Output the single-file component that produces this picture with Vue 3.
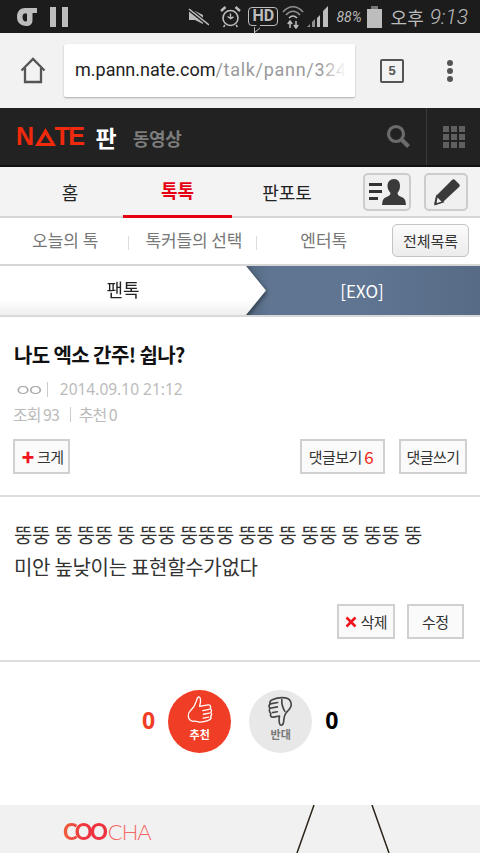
<template>
  <div class="page">
    <div class="status">
      <div class="status-left">
        <svg width="20" height="20" viewBox="0 0 20 20"><path d="M0 10C0 4 3.500 1 8 1h12v5h-4.500v7c0 4-2.500 6-6 6C3.500 19 0 15.500 0 10zM7 6.500C6 7.500 5.500 8.500 5.500 10c0 2.500 1 4.500 3.500 4.500l1-.5V6.500z" fill="#bdbdbd" fill-rule="evenodd"/></svg>
        <svg width="18" height="20" viewBox="0 0 18 20"><path d="M0 0h6v20H0zM12 0h6v20h-6z" fill="#bdbdbd"/></svg>
      </div>
      <div class="status-right">
        <svg class="s-mute" width="21" height="18" viewBox="0 0 21 18"><path d="M1 3h6l8 4v9l-8-4H1z" fill="#bdbdbd"/><path d="M1 1l20 16" stroke="#1c1c1c" stroke-width="4"/><path d="M1 1l20 16" stroke="#bdbdbd" stroke-width="1.600"/></svg>
        <svg class="s-alarm" width="21" height="22" viewBox="0 0 21 22" fill="none" stroke="#bdbdbd"><circle cx="10.500" cy="12" r="7.500" stroke-width="1.600"/><path d="M10.500 7.500v5l-3-2M13.500 11l-3 1.500" stroke-width="1.400"/><path d="M1 5l4.500-4M20 5l-4.500-4" stroke-width="2.400"/><path d="M5 19l-1.500 2M16 19l1.500 2" stroke-width="1.400"/></svg>
        <div class="hd">HD</div>
        <svg class="s-wifi" width="22" height="24" viewBox="0 0 22 24" fill="none" stroke="#8f8f8f"><path d="M1 7c6-7 14-7 20 0" stroke-width="1.600"/><path d="M4 10c4.500-5 9.500-5 14 0" stroke-width="1.600"/><path d="M7 13c2.500-2.500 5.500-2.500 8 0" stroke="#bdbdbd" stroke-width="1.600"/><path d="M8 23v-6M5.800 19l2.200-3 2.200 3M14 16v6M11.800 20l2.200 3 2.200-3" stroke="#bdbdbd" stroke-width="1.500"/></svg>
        <svg class="s-signal" width="21" height="23" viewBox="0 0 21 23"><path d="M0 22h3v-3zM5 22h3v-8l-3 3z" fill="#8f8f8f"/><path d="M10 22h3V10l-3 3zM16 22h5V1l-5 5z" fill="#bdbdbd"/></svg>
        <span class="battery-text">88%</span>
        <div class="battery"></div>
        <span class="clock-ko">오후</span>
        <i class="clock-time">9:13</i>
      </div>
    </div>

    <div class="browser">
      <svg class="home" width="26" height="27" viewBox="0 0 26 27" fill="none" stroke="#555" stroke-width="2.300"><path d="M1.500 13.500L13 2l11.500 11.500"/><path d="M5 11v14h16V11"/></svg>
      <div class="url"><span class="url-main">m.pann.nate.com</span><span class="url-path">/talk/pann/324</span></div>
      <div class="tab-count">5</div>
      <div class="dots"><span></span><span></span><span></span></div>
    </div>

    <header class="nate">
      <div class="logo">N<svg width="21" height="18" viewBox="0 0 21 18"><path d="M10.500 0L21 18H0zM10.500 7L5.500 15h10z" fill="#f02a0c" fill-rule="evenodd"/></svg>TE</div>
      <span class="pan">판</span>
      <span class="video">동영상</span>
      <div class="nate-right">
        <svg class="search" width="25" height="25" viewBox="0 0 25 25" fill="none" stroke="#6b6b6b"><circle cx="10" cy="10" r="7.500" stroke-width="3.200"/><path d="M15.500 15.500l7 7" stroke-width="4.200"/></svg>
        <div class="grid-btn">
          <span v-for="n in 9" :key="n"></span>
        </div>
      </div>
    </header>

    <nav class="tabs">
      <div class="tab tab-home">홈</div>
      <div class="tab active">톡톡</div>
      <div class="tab tab-po">판포토</div>
      <div class="tab-icons">
        <div class="icon-btn wide">
          <svg width="37" height="26" viewBox="0 0 37 26"><path d="M0 4h13v3H0zM0 11h13v3H0zM0 18h9v3H0z" fill="#333"/><path d="M25 0c4 0 6 3 6 7 0 3-1 5-2.500 7 0 2 1.500 3 4 4 2.500 1 4 2 4.500 8H13c.5-6 2-7 4.500-8 2.500-1 4-2 4-4-1.500-2-3-4-3-7 0-4 2.500-7 6.500-7z" fill="#3a3a3a"/></svg>
        </div>
        <div class="icon-btn">
          <svg width="28" height="28" viewBox="0 0 28 28"><path d="M20 2c1-1 2-1 3 0l4 4c1 1 1 2 0 3L11 24 2 26.500 4 18z" fill="#3a3a3a"/><path d="M5 18l6 6-7.500 2.300z" fill="#f3f3f3" stroke="#3a3a3a" stroke-width="1.500"/><path d="M2.500 26.500l.8-3 2.300 2.300z" fill="#3a3a3a"/></svg>
        </div>
      </div>
    </nav>

    <div class="subtabs">
      <span class="sub sub-1">오늘의 톡</span>
      <i class="sep"></i>
      <span class="sub sub-2">톡커들의 선택</span>
      <i class="sep"></i>
      <span class="sub sub-3">엔터톡</span>
      <button class="all">전체목록</button>
    </div>

    <div class="crumb">
      <div class="crumb-left"><div class="crumb-shape">팬톡</div></div>
      <div class="crumb-right">[EXO]</div>
    </div>

    <section class="head">
      <h1>나도 엑소 간주! 쉽나?</h1>
      <div class="meta-1"><span class="nick">ㅇㅇ</span><i class="bar"></i><span>2014.09.10 21:12</span></div>
      <div class="meta-2"><span>조회 93</span><i class="bar"></i><span>추천 0</span></div>
      <div class="head-btns">
        <button class="btn big-btn"><b class="plus">✚</b>크게</button>
        <div class="head-right">
          <button class="btn view-btn">댓글보기 <em>6</em></button>
          <button class="btn write-btn">댓글쓰기</button>
        </div>
      </div>
    </section>

    <section class="body">
      <p>뚱뚱 뚱 뚱뚱 뚱 뚱뚱 뚱뚱뚱 뚱뚱 뚱 뚱뚱 뚱 뚱뚱 뚱<br />미안 높낮이는 표현할수가없다</p>
      <div class="body-btns">
        <button class="btn del-btn"><svg width="12" height="12" viewBox="0 0 12 12"><path d="M1.500 1.500l9 9M10.500 1.500l-9 9" stroke="#f0141e" stroke-width="2.600"/></svg>삭제</button>
        <button class="btn edit-btn">수정</button>
      </div>
    </section>

    <section class="votes">
      <span class="count up">0</span>
      <div class="circle red">
        <svg width="30" height="31" viewBox="0 0 30 33" fill="none" stroke="#fff" stroke-width="1.400" stroke-linejoin="round" stroke-linecap="round"><g transform="rotate(-10 15 16)"><path d="M5 14c3-2 6-5 8-9 1-2 1.500-4 3-4 2 0 2 3 1 6l-1.500 4h9c3 0 3 3 1.500 4 1.500 1 1.500 3.500 0 4.500 1 1 .8 3-.8 4 .5 1.500-.5 3-2 3.500-3 1-9 1.500-12 0-2-1-3.500-1.500-5.500-1.500-3-1-4-3-4-6 0-2.500 1-4 3-5.500z"/><path d="M18 16h7M18 20h6.500M17 24h6"/></g></svg>
        <span>추천</span>
      </div>
      <div class="circle gray">
        <svg width="30" height="31" viewBox="0 0 28 33" fill="none" stroke="#444" stroke-width="1.700" stroke-linejoin="round" stroke-linecap="round"><g transform="rotate(-10 14 16)"><path d="M21 3c3 1 5 3 5 7 0 3-3 6-6 8-3 2-4 5-5 9-.5 2-1 4-3 4-2.500 0-2-4-1.500-7l1-3H5c-3 0-3.500-3-2-4.500C1.500 15 1.500 12 3 11c-1-1.500-.5-3.500 1-4.500C3.500 4.500 5 3 7 2.500c4-1 9-1 14 .5z"/><path d="M3 11h8M4 6.500h8M5 16h5M17 4c-1 4-1 8 1 13"/></g></svg>
        <span>반대</span>
      </div>
      <span class="count down">0</span>
    </section>

    <section class="ad">
      <div class="coocha"><span class="coo">COO</span><span class="cha">CHA</span></div>
      <svg class="ad-art" width="110" height="48" viewBox="0 0 110 48" fill="none" stroke="#2b2418" stroke-width="1.500"><path d="M29 0L12 48M87 0L104 48"/></svg>
    </section>
  </div>
</template>

<script setup>
</script>

<style>
html,
body {
  margin: 0;
  background: #fff;
}
</style>

<style scoped>
.page {
  width: 480px;
  height: 853px;
  overflow: hidden;
  background: #fff;
  font-family: "Noto Sans CJK KR", "Noto Sans", sans-serif;
  color: #222;
}

.status {
  height: 33px;
  background: #1c1c1c;
  display: flex;
  align-items: center;
  justify-content: space-between;
  padding: 0 12px 0 17px;
  color: #bdbdbd;
}

.status-left,
.status-right {
  display: flex;
  align-items: center;
}

.status-left {
  gap: 13px;
}

.s-alarm {
  margin-left: 11px;
}

.hd {
  width: 30px;
  height: 19px;
  margin-left: 7px;
  border: 1.500px solid #bdbdbd;
  border-radius: 4px;
  box-sizing: border-box;
  font: bold 16px/16px "Roboto", sans-serif;
  text-align: center;
  position: relative;
}

.hd::after {
  content: "";
  position: absolute;
  left: 5px;
  bottom: -6px;
  width: 6px;
  height: 6px;
  border-left: 1.500px solid #bdbdbd;
  border-bottom: 1.500px solid #bdbdbd;
  transform: skewY(-40deg);
  background: #1c1c1c;
  box-sizing: border-box;
}

.s-wifi {
  margin-left: 4px;
}

.s-signal {
  margin-left: 3px;
}

.battery-text {
  font: italic 14px "Roboto", sans-serif;
  margin-left: 8px;
}

.battery {
  width: 15px;
  height: 19px;
  margin: 3px 0 0 5px;
  background: #bdbdbd;
  position: relative;
}

.battery::before {
  content: "";
  position: absolute;
  top: -3px;
  left: 4px;
  width: 7px;
  height: 3px;
  background: #777;
}

.clock-ko {
  font-size: 18px;
  margin-left: 9px;
  white-space: nowrap;
}

.clock-time {
  font: italic 300 21px "Roboto", sans-serif;
  margin-left: 6px;
  white-space: nowrap;
}

.browser {
  height: 75px;
  background: #f2f2f2;
  display: flex;
  align-items: center;
  box-sizing: border-box;
  padding-left: 20px;
}

.url {
  width: 291px;
  height: 53px;
  margin-left: 18px;
  background: #fff;
  border-radius: 2px;
  box-shadow: 0 1px 2px rgba(0, 0, 0, 0.3);
  box-sizing: border-box;
  padding-left: 11px;
  font: 18px/51px "Roboto", sans-serif;
  white-space: nowrap;
  overflow: hidden;
  position: relative;
}

.url::after {
  content: "";
  position: absolute;
  right: 0;
  top: 0;
  width: 34px;
  height: 100%;
  background: linear-gradient(to right, rgba(255, 255, 255, 0), #fff 75%);
}

.url-main {
  color: #222;
}

.url-path {
  color: #9a9a9a;
  letter-spacing: 0.7px;
}

.tab-count {
  width: 24px;
  height: 24px;
  margin-left: 25px;
  border: 2px solid #555;
  border-radius: 2px;
  box-sizing: border-box;
  font: bold 13px/20px "Liberation Sans", sans-serif;
  color: #555;
  text-align: center;
}

.dots {
  display: flex;
  flex-direction: column;
  gap: 2px;
  margin-left: 43px;
}

.dots span {
  width: 6px;
  height: 6px;
  border-radius: 50%;
  background: #555;
}

.nate {
  height: 59px;
  background: #222;
  border-bottom: 2px solid #111;
  box-sizing: border-box;
  display: flex;
  align-items: center;
  padding-left: 16px;
}

.logo {
  display: flex;
  align-items: center;
  font: bold 25px/1 "Liberation Sans", sans-serif;
  color: #f02a0c;
  letter-spacing: -1.500px;
}

.logo svg {
  margin: 0 -1px 0 2px;
}

.pan {
  color: #fff;
  font-size: 23px;
  font-weight: 700;
  margin-left: 12px;
}

.video {
  color: #7c7c7c;
  font-size: 18px;
  font-weight: 700;
  margin-left: 16px;
  margin-top: 2px;
  letter-spacing: -0.3px;
}

.nate-right {
  margin-left: auto;
  display: flex;
  align-items: center;
  height: 100%;
}

.search {
  margin-right: 15px;
}

.grid-btn {
  height: 100%;
  width: 54px;
  border-left: 1px solid #3a3a3a;
  box-sizing: border-box;
  display: grid;
  grid-template-columns: repeat(3, 6px);
  grid-auto-rows: 6px;
  gap: 2px;
  place-content: center;
}

.grid-btn span {
  background: #5f5f5f;
}

.tabs {
  height: 51px;
  background: #f3f3f3;
  border-bottom: 2px solid #d6d6d6;
  box-sizing: border-box;
  display: flex;
  position: relative;
}

.tab {
  display: flex;
  align-items: center;
  justify-content: center;
  font-size: 18px;
  color: #222;
  padding-bottom: 2px;
  height: 51px;
  box-sizing: border-box;
}

.tab-home {
  width: 123px;
  padding-left: 17px;
}

.tab.active {
  width: 109px;
  color: #e60012;
  font-weight: 700;
  border-bottom: 3px solid #e60012;
}

.tab-po {
  width: 110px;
}

.tab-icons {
  display: flex;
  gap: 13px;
  padding-top: 6px;
  position: absolute;
  right: 12px;
  top: 0;
}

.icon-btn {
  width: 44px;
  height: 38px;
  border: 2px solid #ccc;
  border-radius: 5px;
  background: #f0f0f0;
  box-sizing: border-box;
  display: flex;
  align-items: center;
  justify-content: center;
}

.icon-btn.wide {
  width: 48px;
}

.subtabs {
  height: 48px;
  background: #fff;
  border-bottom: 2px solid #d6d6d6;
  box-sizing: border-box;
  display: flex;
  align-items: center;
  font-size: 17px;
  color: #777;
  position: relative;
}

.sub {
  margin-top: -3px;
}

.sub-1 {
  margin-left: 32px;
}

.sep {
  width: 1px;
  height: 14px;
  background: #ddd;
  margin-top: 3px;
}

.sub-1 + .sep {
  margin-left: 30px;
}

.sub-2 {
  margin-left: 16px;
  letter-spacing: -0.1px;
}

.sub-2 + .sep {
  margin-left: 14px;
}

.sub-3 {
  margin-left: 43px;
}

.all {
  position: absolute;
  right: 11px;
  top: 6px;
  width: 77px;
  height: 33px;
  padding: 0;
  border: 1px solid #c4c4c4;
  border-radius: 5px;
  background: linear-gradient(#fbfbfb, #ececec);
  font: 15px "Noto Sans CJK KR", sans-serif;
  color: #333;
}

.crumb {
  height: 51px;
  display: flex;
  position: relative;
  overflow: hidden;
  background: linear-gradient(to right, #536880 246px, #5f7591 270px, #5f7591 360px, #576b86);
  border-bottom: 2px solid #d9d9d9;
  box-sizing: border-box;
}

.crumb-left {
  width: 266px;
  filter: drop-shadow(1px 2px 2px rgba(0, 0, 0, 0.45));
}

.crumb-shape {
  height: 100%;
  padding: 0 20px 3px 0;
  box-sizing: border-box;
  background: linear-gradient(#fff 70%, #eee);
  clip-path: polygon(0 0, 246px 0, 266px 50%, 246px 100%, 0 100%);
  display: flex;
  align-items: center;
  justify-content: center;
  font-size: 18px;
  color: #222;
}

.crumb-right {
  flex: 1;
  display: flex;
  align-items: center;
  justify-content: center;
  color: #fff;
  font: 17px "Noto Sans CJK KR", sans-serif;
  padding-right: 22px;
}

.head {
  height: 180px;
  box-sizing: border-box;
  border-bottom: 2px solid #ddd;
  padding: 23px 13px 0;
}

h1 {
  margin: 0 0 0 1px;
  font-size: 20px;
  line-height: 30px;
  font-weight: 700;
  color: #111;
  letter-spacing: -0.6px;
}

.meta-1,
.meta-2 {
  display: flex;
  align-items: center;
  color: #bbb;
  font-size: 16px;
  line-height: 24px;
}

.meta-1 {
  margin: 7px 0 0 1px;
  font-family: "Noto Sans", sans-serif;
  font-size: 15.500px;
}

.nick {
  display: inline-block;
  letter-spacing: -4px;
  font-size: 14px;
  font-family: "Noto Sans CJK KR", sans-serif;
  color: #aaa;
  transform: scaleX(1.400);
  transform-origin: left center;
  margin-right: 8px;
}

.bar {
  width: 1px;
  height: 15px;
  background: #ccc;
  margin: 0 12px 0 7px;
}

.meta-2 {
  margin-top: 1px;
  letter-spacing: -1px;
}

.meta-2 .bar {
  margin: 0 8px 0 11px;
}

.head-btns {
  display: flex;
  justify-content: space-between;
  margin-top: 13px;
}

.head-right {
  display: flex;
  gap: 14px;
}

.btn {
  height: 35px;
  border: 2px solid #d0d0d0;
  background: #fafafa;
  padding: 0;
  box-sizing: border-box;
  font: 15px "Noto Sans CJK KR", sans-serif;
  color: #333;
  display: inline-flex;
  align-items: center;
  justify-content: center;
  letter-spacing: -0.6px;
  white-space: pre;
}

.big-btn {
  width: 57px;
  padding-left: 2px;
}

.plus {
  color: #f0141e;
  font-size: 13px;
  margin-right: 3px;
}

.view-btn {
  width: 85px;
  padding-right: 3px;
}

.view-btn em {
  font-style: normal;
  font-size: 17px;
  color: #f0240f;
}

.write-btn {
  width: 68px;
}

.body {
  height: 165px;
  box-sizing: border-box;
  border-bottom: 2px solid #ddd;
  padding: 22px 14px 0;
}

.body p {
  margin: 0;
  font-size: 20px;
  line-height: 32px;
  color: #333;
  letter-spacing: -0.3px;
  white-space: nowrap;
}

.body-btns {
  display: flex;
  justify-content: flex-end;
  gap: 12px;
  margin-top: 21px;
  padding-right: 2px;
}

.del-btn,
.edit-btn {
  width: 57.500px;
}

.del-btn svg {
  margin-right: 4px;
}

.votes {
  height: 143px;
  display: flex;
  align-items: flex-start;
  padding-top: 28px;
  box-sizing: border-box;
  background: #fff;
}

.count {
  font: bold 23px/60px "Noto Sans", sans-serif;
}

.up {
  color: #f03e26;
  margin-left: 142px;
}

.down {
  color: #000;
  margin-left: 13px;
}

.circle {
  width: 63px;
  height: 63px;
  border-radius: 50%;
  display: flex;
  flex-direction: column;
  align-items: center;
  box-sizing: border-box;
  padding-top: 6px;
  font-size: 11px;
  font-weight: 700;
  line-height: 14px;
}

.red {
  background: #f03e26;
  color: #fff;
  margin-left: 13px;
}

.gray {
  background: #e8e8e8;
  color: #777;
  margin-left: 18px;
}

.ad {
  height: 48px;
  background: #f1f1f1;
  position: relative;
  padding: 18px 0 0 63px;
  box-sizing: border-box;
}

.coocha {
  font: 22px/18px "Lato", sans-serif;
}

.coo {
  color: #ee3340;
  font-weight: 900;
  letter-spacing: -2.500px;
  background: linear-gradient(to right, #f0603a, #ee3340 50%);
  -webkit-background-clip: text;
  background-clip: text;
  -webkit-text-fill-color: transparent;
  padding-right: 2.500px;
}

.cha {
  color: #f26a64;
  font-weight: 300;
  letter-spacing: -1px;
}

.ad-art {
  position: absolute;
  left: 285px;
  top: 0;
}
</style>
